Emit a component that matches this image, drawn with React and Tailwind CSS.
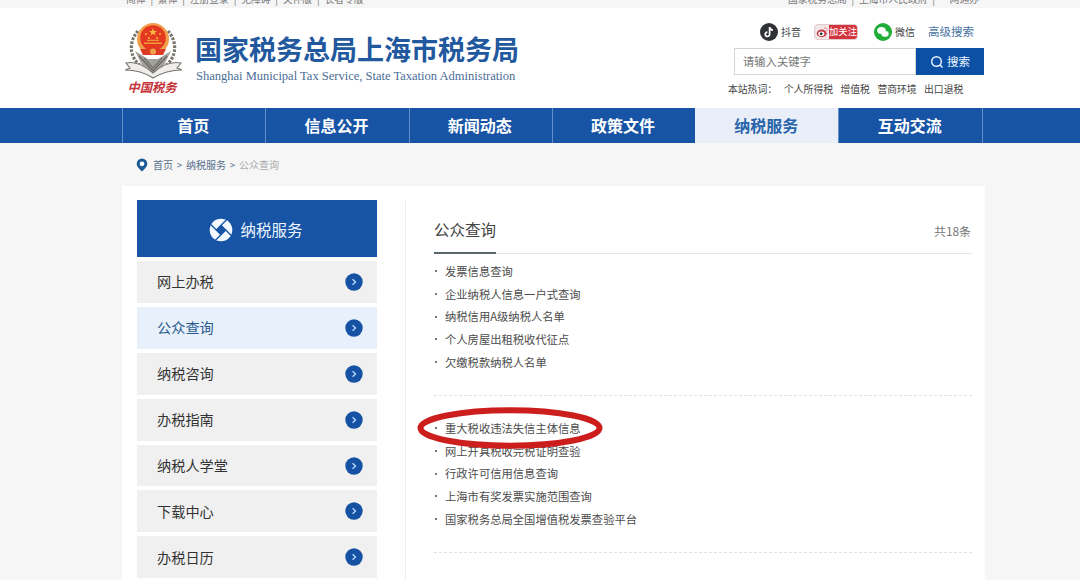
const topLinks = ['简体', '繁体', '注册登录', '无障碍', '关怀版', '长者专版'];
const agencyLinks = ['国家税务总局', '上海市人民政府', '一网通办'];
const navItems = ['首页', '信息公开', '新闻动态', '政策文件', '纳税服务', '互动交流'];
const sideItems = ['网上办税', '公众查询', '纳税咨询', '办税指南', '纳税人学堂', '下载中心', '办税日历'];
const firstGroup = ['发票信息查询', '企业纳税人信息一户式查询', '纳税信用A级纳税人名单', '个人房屋出租税收代征点', '欠缴税款纳税人名单'];
const secondGroup = ['重大税收违法失信主体信息', '网上开具税收完税证明查验', '行政许可信用信息查询', '上海市有奖发票实施范围查询', '国家税务总局全国增值税发票查验平台'];
const hotWords = ['个人所得税', '增值税', '营商环境', '出口退税'];

function Emblem() {
  return (
    <svg viewBox="0 0 58 78" className="h-[78px] w-[58px]">
      <g fill="none" stroke="#77736c" strokeWidth="3.2" strokeDasharray="2.6 1.4">
        <path d="M13 10C4 20 3 36 17 46" />
        <path d="M43 10C52 20 53 36 39 46" />
      </g>
      <path d="M10 30l13 8h10l13-8-7 14-11 9-11-9z" fill="#a3a19c" />
      <path d="M14 35l14 15 14-15M19 37l9 10 9-10" fill="none" stroke="#64625e" strokeWidth="1.1" />
      <path d="M1 42c9-2 18 2 27 10 9-8 18-12 28-10l-4 5 5 2c-10 0-19 2-29 8-9-6-18-8-28-8l5-2z" fill="#efeeeb" stroke="#77756f" strokeWidth="1.1" />
      <circle cx="28" cy="18" r="16" fill="#f0a04a" />
      <circle cx="28" cy="17" r="12.8" fill="#e43820" />
      <path d="M28 7l1.1 2.900h3l-2.400 1.800.9 2.800-2.600-1.700-2.600 1.700.9-2.800-2.400-1.800h3z" fill="#f6b83f" />
      <path d="M20 13h2m12 0h2m-13 4h2m6 0h2" stroke="#f6b83f" strokeWidth="1.300" />
      <path d="M19 23h18v-1.500H19zm3-3h12v-1.200H22z" fill="#f09a38" />
      <path d="M15 28h26l-3 6H18z" fill="#dd3a25" />
      <circle cx="28" cy="30.500" r="3" fill="#efa34a" />
    </svg>
  );
}

function Pinwheel() {
  return (
    <svg viewBox="0 0 24 24" className="h-6 w-6">
      <circle cx="12" cy="12" r="11.3" fill="#f3f8ff" />
      <path d="M12 7.300L16.700 12 12 16.700 7.300 12z" fill="#1754a5" />
      <path d="M1 5.700L12 16.700M5.700 23L16.700 12M23 18.300L12 7.300M18.300 1L7.300 12" stroke="#1754a5" strokeWidth="1.300" />
    </svg>
  );
}

function Arrow() {
  return (
    <svg viewBox="0 0 18 18" className="h-[18px] w-[18px]">
      <circle cx="9" cy="9" r="8.7" fill="#1552a3" />
      <path d="M7.6 6.3l2.9 2.7-2.9 2.7" fill="none" stroke="#bcdcff" strokeWidth="1.3" />
    </svg>
  );
}

function List({ items }) {
  return (
    <ul>
      {items.map((item) => (
        <li key={item} className="flex h-[22.7px] items-center text-[11.3px] whitespace-nowrap text-[#4b4b4b]">
          <span className="ml-px h-0.5 w-0.5 bg-[#777]" />
          <span className="ml-2">{item}</span>
        </li>
      ))}
    </ul>
  );
}

function LinkStrip({ items }) {
  return (
    <div className="flex gap-[4.8px] whitespace-nowrap">
      {items.map((item, index) => (
        <span key={item} className="flex gap-[4.8px]">
          {index > 0 && <span>|</span>}
          <span>{item}</span>
        </span>
      ))}
    </div>
  );
}

export default function App() {
  return (
    <div className="h-[580px] w-[1080px] overflow-hidden bg-[#f6f6f6] font-['Noto_Sans_CJK_SC',sans-serif] text-[#444]">
      <div className="flex h-2 items-end justify-between overflow-hidden pr-[101px] pl-[126px] text-[9.8px] leading-[17px] text-[#777]">
        <LinkStrip items={topLinks} />
        <LinkStrip items={agencyLinks} />
      </div>
      <header className="flex h-[100px] bg-white">
        <div className="ml-[125px] flex w-[58px] flex-col pt-[13px]">
          <div className="h-[56px] overflow-visible"><Emblem /></div>
          <div className="relative z-10 -ml-1 text-center font-['Liberation_Serif','Noto_Sans_CJK_SC',serif] text-[12.3px] leading-[22px] font-bold whitespace-nowrap text-[#c5343b] italic">中国税务</div>
        </div>
        <div className="ml-[12px] w-[340px] pt-[21px]">
          <div className="text-[27px] leading-[39px] font-bold whitespace-nowrap text-[#22589d]">国家税务总局上海市税务局</div>
          <div className="ml-px font-['Liberation_Serif',serif] text-[12.53px] leading-[16px] whitespace-nowrap text-[#4a6d95]">Shanghai Municipal Tax Service, State Taxation Administration</div>
        </div>
        <div className="ml-auto mr-[95px] w-[257px] pt-[14px]">
          <div className="flex h-5 items-center pl-[32px] text-[10px] whitespace-nowrap">
            <svg viewBox="0 0 18 18" className="h-[18px] w-[18px]">
              <circle cx="9" cy="9" r="9" fill="#303236" />
              <path d="M9.6 4v7.2a2.2 2.2 0 1 1-2.2-2.1M9.6 4.2c.4 1.8 1.5 2.8 3.3 2.9" fill="none" stroke="#fff" strokeWidth="1.7" />
            </svg>
            <span className="-mt-0.5 ml-[3px]">抖音</span>
            <span className="ml-[13px] flex h-4 w-[44px] items-center overflow-hidden rounded-sm border border-[#e3cccf] bg-[#f3e6e7]">
              <svg viewBox="0 0 14 14" className="h-[14px] w-[14px]">
                <ellipse cx="6.7" cy="8.4" rx="5" ry="3.8" fill="#c83b48" />
                <ellipse cx="6.3" cy="8.8" rx="3" ry="2.3" fill="#fff" />
                <circle cx="6.2" cy="8.8" r="1.4" fill="#333" />
                <path d="M9 3c2-.5 3.500.6 3.200 2.800" fill="none" stroke="#d88" />
              </svg>
              <span className="h-full flex-1 bg-[#d3353f] text-center text-[9.3px] leading-[12px] text-white">加关注</span>
            </span>
            <svg viewBox="0 0 18 18" className="ml-[16px] h-[18px] w-[18px]">
              <circle cx="9" cy="9" r="9" fill="#20ac38" />
              <ellipse cx="7.5" cy="7.5" rx="4.3" ry="3.5" fill="#fff" />
              <ellipse cx="11" cy="10.8" rx="3.6" ry="2.9" fill="#fff" stroke="#c7efcc" strokeWidth=".5" />
            </svg>
            <span className="-mt-0.5 ml-[3px]">微信</span>
            <span className="ml-[13px] text-[11.5px] text-[#48739f]">高级搜索</span>
          </div>
          <div className="mt-[6px] ml-[6px] flex h-[27px] w-[250px]">
            <div className="flex flex-1 items-center border border-[#d4d4d4] pl-2 text-[11.3px] text-[#777]">请输入关键字</div>
            <div className="flex w-[68px] items-center justify-center gap-[3px] bg-[#0b50a4] text-[11.5px] text-[#edf6ff]">
              <svg viewBox="0 0 14 14" className="h-[14px] w-[14px]" fill="none" stroke="currentColor" strokeWidth="1.4">
                <circle cx="6.5" cy="6.5" r="4.8" />
                <path d="M10 10l2.5 2.5" />
              </svg>
              <span>搜索</span>
            </div>
          </div>
          <div className="mt-[6px] flex text-[9.8px] leading-[17px] whitespace-nowrap">
            <span className="w-[56px]">本站热词：</span>
            {hotWords.map((word) => <span key={word} className="mr-[7.5px]">{word}</span>)}
          </div>
        </div>
      </header>
      <nav className="flex h-[35px] bg-[#1754a5] pl-[122px] text-[16px] font-bold text-white">
        {navItems.map((item) => (
          <div key={item} className={item === '纳税服务' ? 'flex w-[143.3px] items-center justify-center border-l border-[#e9eef9] bg-[#e9eef9] pr-0.5 pb-px text-[#2864aa]' : 'flex w-[143.3px] items-center justify-center border-l border-[#6290c9] pr-0.5 pb-px'}>{item}</div>
        ))}
        <div className="w-px bg-[#6290c9]" />
      </nav>
      <div className="flex h-[43px] items-center pl-[136px] text-[10px] text-[#57708c]">
        <svg viewBox="0 0 12 14" className="h-[14px] w-3">
          <path d="M6 .5a5.3 5.3 0 0 0-5.3 5.3C.7 9 4 11.5 6 13.5 8 11.5 11.300 9 11.300 5.800A5.300 5.300 0 0 0 6 .5z" fill="#1b5a95" />
          <circle cx="6" cy="5.800" r="2.400" fill="#fff" />
        </svg>
        <span className="ml-[5px]">首页</span>
        <span className="w-[13px] text-center">&gt;</span>
        <span>纳税服务</span>
        <span className="w-[13px] text-center">&gt;</span>
        <span className="text-[#aaa]">公众查询</span>
      </div>
      <main className="ml-[122px] flex h-[394px] w-[863px] bg-white pt-[14px] pl-[15px]">
        <aside className="w-[240px] shrink-0">
          <div className="flex h-[57px] items-center justify-center gap-[7px] bg-[#1754a5] pt-[3px] pr-0.5 text-[15.5px] text-[#edf6ff]">
            <Pinwheel />
            <span>纳税服务</span>
          </div>
          <div className="mt-1 flex flex-col gap-1">
            {sideItems.map((item) => (
              <div key={item} className={item === '公众查询' ? 'flex h-[41.9px] items-center justify-between bg-[#e7f0fb] pr-[14px] pl-[20px] text-[14.2px] text-[#28598d]' : 'flex h-[41.9px] items-center justify-between bg-[#f0f0f0] pr-[14px] pl-[20px] text-[14.2px] text-[#333]'}>
                <span>{item}</span>
                <Arrow />
              </div>
            ))}
          </div>
        </aside>
        <section className="ml-[28px] h-full flex-1 border-l border-[#eee] pl-[28px]">
          <div className="flex h-[54px] w-[538px] justify-between border-b border-[#e5e5e5]">
            <h1 className="h-[54px] border-b-2 border-[#59666b] pt-[17px] text-[15.5px] leading-[24px] text-[#444]">公众查询</h1>
            <span className="pt-[21px] pr-px text-[11.9px] leading-[20px] text-[#777]">共18条</span>
          </div>
          <div className="h-[142px] w-[538px] border-b border-dashed border-[#e2e2e2] pt-[6px]"><List items={firstGroup} /></div>
          <div className="relative h-[157px] w-[538px] border-b border-dashed border-[#e2e2e2] pt-[21px]">
            <List items={secondGroup} />
            <svg viewBox="0 0 186 42" className="absolute top-[11px] -left-[17px] h-[42px] w-[186px]">
              <ellipse cx="93" cy="21" rx="89.500" ry="17.700" fill="none" stroke="#cc1f1d" strokeWidth="6" />
            </svg>
          </div>
          <div className="pt-[21.5px]"><List items={['上海市税务局办税地图']} /></div>
        </section>
      </main>
    </div>
  );
}
